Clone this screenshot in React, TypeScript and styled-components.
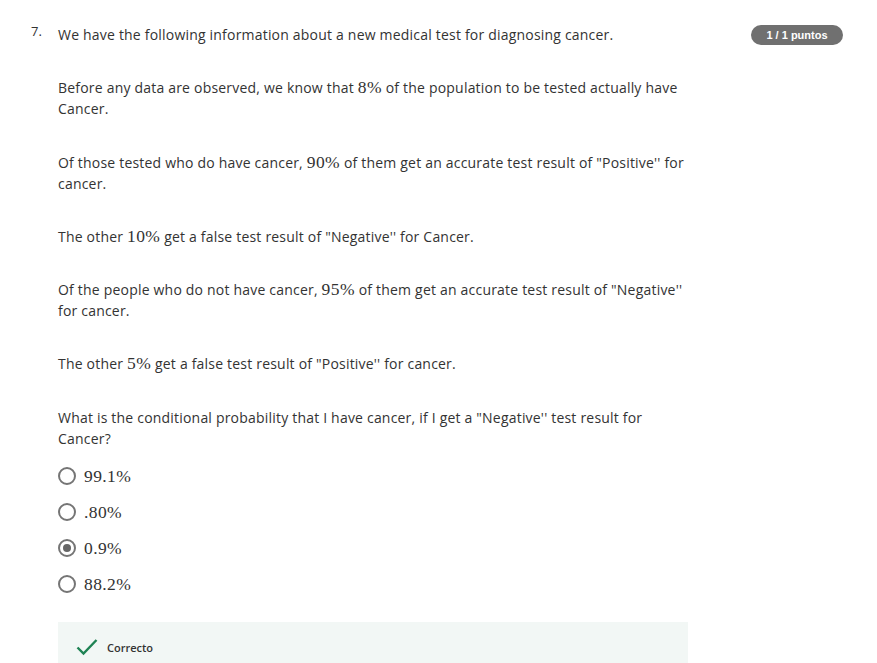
import React from "react";
import styled, { createGlobalStyle } from "styled-components";

const Global = createGlobalStyle`
  html, body { margin: 0; padding: 0; background: #fff; }
  body { font-family: "Open Sans", "Noto Sans", sans-serif; color: #333; }
`;

const Page = styled.div`
  display: flex;
  align-items: flex-start;
  padding: 24px 34px 0 31px;
`;

const Number = styled.div`
  width: 27px;
  flex: none;
  font-size: 13px;
  line-height: 21px;
  margin-top: -3px;
  color: #333;
`;

const Body = styled.div`
  flex: 1;
  max-width: 630px;
`;

const Para = styled.p`
  margin: 0 0 32.25px 0;
  font-size: 14px;
  letter-spacing: 0.2px;
  line-height: 21px;
  color: #333;
`;

const LastPara = styled(Para)`
  margin-bottom: 9.5px;
`;

const Math = styled.span`
  font-family: "Liberation Serif", "Times New Roman", serif;
  font-size: 17.5px;
  letter-spacing: 0.4px;
  line-height: 1;
`;

const Options = styled.div`
  display: flex;
  flex-direction: column;
`;

const OptionRow = styled.label`
  display: flex;
  align-items: center;
  height: 36px;
  gap: 8px;
`;

const Radio = styled.span<{ $checked?: boolean }>`
  width: 18px;
  height: 18px;
  box-sizing: border-box;
  border: 2px solid #757575;
  border-radius: 50%;
  display: flex;
  align-items: center;
  justify-content: center;
  &::after {
    content: "";
    width: 8px;
    height: 8px;
    border-radius: 50%;
    background: ${(p) => (p.$checked ? "#666" : "transparent")};
  }
`;

const OptionText = styled.span`
  font-family: "Liberation Serif", "Times New Roman", serif;
  font-size: 17.5px;
  letter-spacing: 0.4px;
  color: #333;
`;

const Feedback = styled.div`
  margin-top: 20px;
  background: #f2f7f5;
  padding: 16px 18px 20px 18px;
`;

const FeedbackHead = styled.div`
  display: flex;
  align-items: center;
  gap: 9px;
`;

const FeedbackTitle = styled.span`
  font-size: 11px;
  font-weight: 600;
  color: #333;
`;

const FeedbackText = styled.p`
  margin: 13px 0 0 31px;
  font-size: 14px;
  letter-spacing: 0.2px;
  line-height: 21px;
  color: #333;
`;

const Badge = styled.div`
  flex: none;
  margin-left: auto;
  margin-top: 1px;
  background: #707070;
  color: #fff;
  font-family: "Liberation Sans", Arial, sans-serif;
  font-weight: 700;
  font-size: 11px;
  height: 20px;
  line-height: 20px;
  width: 92px;
  text-align: center;
  border-radius: 10px;
`;

const options = [
  { label: "99.1%", checked: false },
  { label: ".80%", checked: false },
  { label: "0.9%", checked: true },
  { label: "88.2%", checked: false },
];

export default function App() {
  return (
    <>
      <Global />
      <Page>
        <Number>7.</Number>
        <Body>
          <Para>We have the following information about a new medical test for diagnosing cancer.</Para>
          <Para>
            Before any data are observed, we know that <Math>8%</Math> of the population to be tested actually have
            Cancer.
          </Para>
          <Para>
            Of those tested who do have cancer, <Math>90%</Math> of them get an accurate test result of "Positive'' for
            cancer.
          </Para>
          <Para>
            The other <Math>10%</Math> get a false test result of "Negative'' for Cancer.
          </Para>
          <Para>
            Of the people who do not have cancer, <Math>95%</Math> of them get an accurate test result of "Negative''
            for cancer.
          </Para>
          <Para>
            The other <Math>5%</Math> get a false test result of "Positive'' for cancer.
          </Para>
          <LastPara>
            What is the conditional probability that I have cancer, if I get a "Negative'' test result for Cancer?
          </LastPara>
          <Options>
            {options.map((o) => (
              <OptionRow key={o.label}>
                <Radio $checked={o.checked} />
                <OptionText>{o.label}</OptionText>
              </OptionRow>
            ))}
          </Options>
          <Feedback>
            <FeedbackHead>
              <svg width="22" height="18" viewBox="0 0 22 18" fill="none">
                <path d="M1.5 9.5 L7.5 15.5 L20.5 2" stroke="#1f8354" strokeWidth="2.4" fill="none" />
              </svg>
              <FeedbackTitle>Correcto</FeedbackTitle>
            </FeedbackHead>
            <FeedbackText>La probabilidad condicional es aproximadamente 0.9%.</FeedbackText>
          </Feedback>
        </Body>
        <Badge>1 / 1 puntos</Badge>
      </Page>
    </>
  );
}
